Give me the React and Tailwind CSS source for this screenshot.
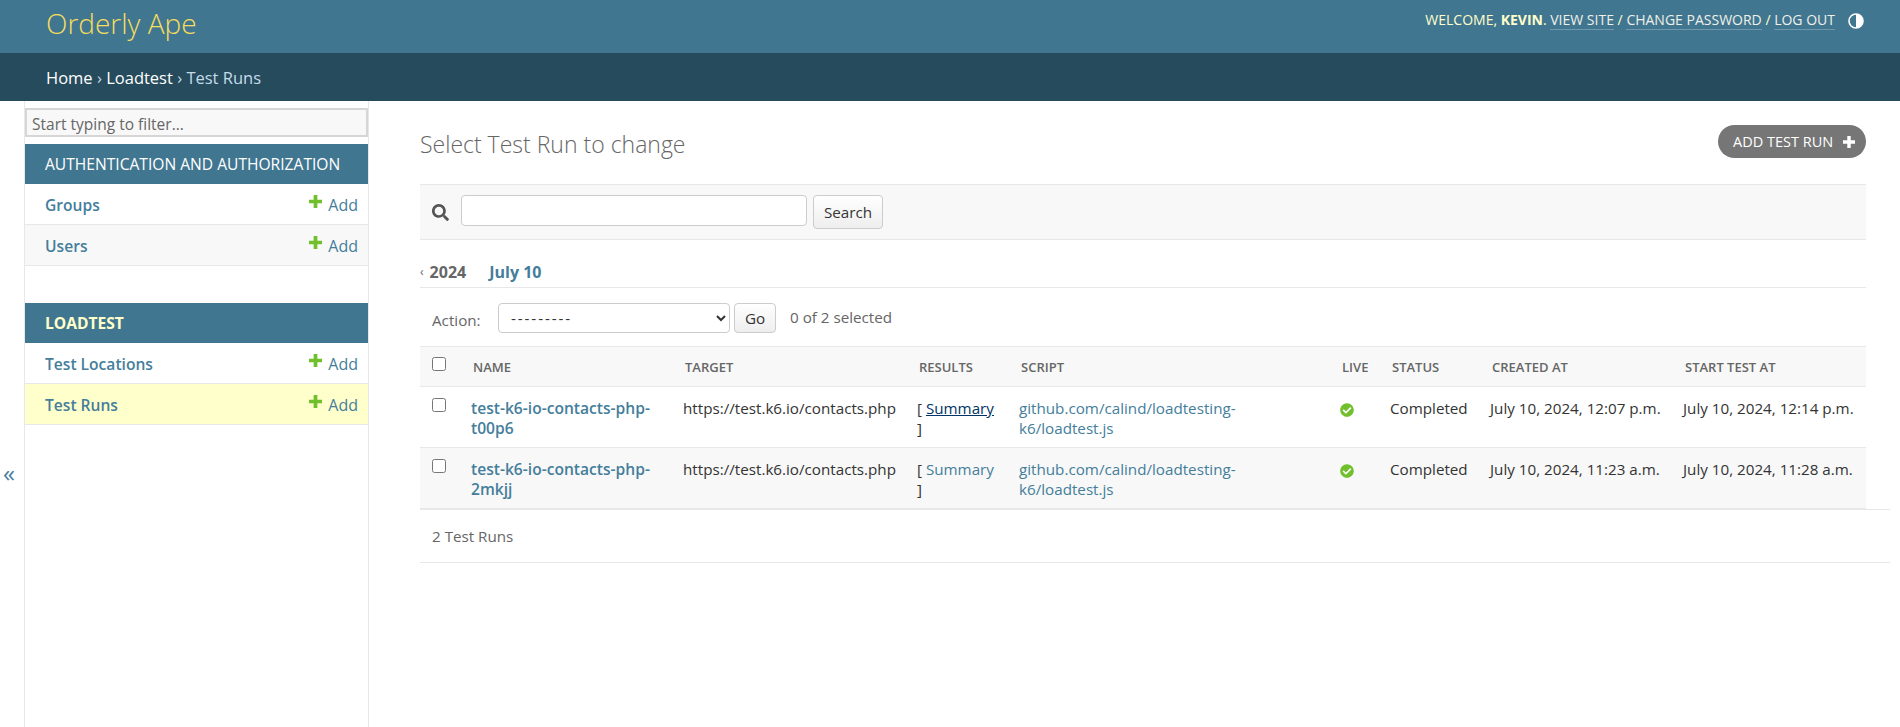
import React from "react";
import { FaSearch, FaCheckCircle } from "react-icons/fa";

function PlusIcon({ className }) {
  return (
    <svg viewBox="0 0 14 14" className={className} fill="currentColor">
      <path d="M5 0h4v5h5v4H9v5H5V9H0V5h5z" />
    </svg>
  );
}

function SideRow({ label, active, striped }) {
  return (
    <div className={`h-[41px] flex items-center justify-between pt-[2px] pl-5 pr-[10px] border-b border-[#e8e8e8] ${active ? "bg-[#ffffcc]" : striped ? "bg-[#f8f8f8]" : "bg-white"}`}>
      <span className="text-[#447e9b] font-semibold text-[15.6px]">{label}</span>
      <span className="flex items-center gap-[6px] text-[#447e9b] text-[16px]">
        <PlusIcon className="w-[13px] h-[13px] text-[#70bf2b] -mt-[7px]" />
        Add
      </span>
    </div>
  );
}

function TestRow({ name, suffix, created, started, striped, hovered }) {
  return (
    <tr className={`border-b border-[#e8e8e8] align-top h-[61px] ${striped ? "bg-[#f8f8f8]" : "bg-white"}`}>
      <td className="pl-3 pt-[11px]">
        <input type="checkbox" className="w-[14px] h-[14px] block" />
      </td>
      <td className="px-[5px] pt-[11px] pb-2 font-semibold text-[15.6px]">
        <a className="text-[#447e9b]">{name}<br />{suffix}</a>
      </td>
      <td className="px-[5px] pt-[11px] pb-2 whitespace-nowrap">https://test.k6.io/contacts.php</td>
      <td className="px-[5px] pt-[11px] pb-2">
        [ <a className={hovered ? "text-[#003366] underline" : "text-[#447e9b]"}>Summary</a><br />]
      </td>
      <td className="px-[5px] pt-[11px] pb-2 text-[#447e9b]">github.com/calind/loadtesting-<br />k6/loadtest.js</td>
      <td className="px-[5px] pt-[16px]">
        <FaCheckCircle className="w-[14px] h-[14px] text-[#70bf2b]" />
      </td>
      <td className="px-[5px] pt-[11px] pb-2">Completed</td>
      <td className="px-[5px] pt-[11px] pb-2 whitespace-nowrap">{created}</td>
      <td className="px-[5px] pt-[11px] pb-2 whitespace-nowrap">{started}</td>
    </tr>
  );
}

export default function App() {
  const headCell = "px-[7px] text-left font-semibold text-[13px] text-[#666] uppercase";
  return (
    <div className="h-screen flex flex-col overflow-hidden bg-white text-[#333] text-[15.2px] leading-5 font-['Open_Sans','Noto_Sans',sans-serif]">
      <header className="h-[53px] bg-[#417690] flex justify-between pl-[46px] pr-[36px] shrink-0">
        <div className="text-[#f5dd5d] font-light text-[28px] leading-[46px]">Orderly Ape</div>
        <div className="flex items-start pt-[10px] text-[#ffffcc] text-[14px] uppercase">
          <span>
            Welcome, <strong className="font-bold">Kevin</strong>.{" "}
            <a className="text-[#f0f0e8] border-b border-white/25">View site</a> /{" "}
            <a className="text-[#f0f0e8] border-b border-white/25">Change password</a> /{" "}
            <a className="text-[#f0f0e8] border-b border-white/25">Log out</a>
          </span>
          <svg viewBox="0 0 16 16" className="w-4 h-4 ml-[13px] mt-[3px]">
            <circle cx="8" cy="8" r="7" fill="none" stroke="#fff" strokeWidth="1.6" />
            <path d="M8 1a7 7 0 0 1 0 14z" fill="#fff" />
          </svg>
        </div>
      </header>

      <nav className="h-[48px] bg-[#264b5d] flex items-center pt-[2px] pl-[46px] text-[16.5px] text-[#c4dce8] shrink-0">
        <a className="text-white">Home</a>&nbsp;›&nbsp;<a className="text-white">Loadtest</a>&nbsp;›&nbsp;Test Runs
      </nav>

      <div className="flex flex-1 min-h-0">
        <button className="w-[24px] shrink-0 flex justify-start pl-[3px] pt-[360px] text-[#447e9b] text-[24px] leading-6">«</button>

        <aside className="w-[345px] shrink-0 border-x border-[#e8e8e8] pt-[7px]">
          <input
            placeholder="Start typing to filter..."
            className="w-full h-[29px] mb-[7px] bg-[#f8f8f8] border-2 border-[#d6d6d6] px-[5px] pt-[3px] text-[15.5px] placeholder:text-[#666] outline-none"
          />
          <div className="h-10 bg-[#417690] flex items-center pl-5 text-white text-[15.6px] uppercase">Authentication and Authorization</div>
          <SideRow label="Groups" />
          <SideRow label="Users" striped />
          <div className="h-[37px]" />
          <div className="h-10 bg-[#417690] flex items-center pl-5 text-[#ffffcc] font-bold text-[15.6px] uppercase">Loadtest</div>
          <SideRow label="Test Locations" />
          <SideRow label="Test Runs" active />
        </aside>

        <main className="flex-1 min-w-0 pl-[51px] pr-[34px]">
          <div className="flex justify-between items-start h-[83px] pt-[23px]">
            <h1 className="font-light text-[23px] leading-10 text-[#666]">Select Test Run to change</h1>
            <a className="h-[33px] w-[148px] mt-px rounded-full bg-[#767676] text-white text-[14.5px] uppercase flex items-center justify-between pl-[15px] pr-[11px]">
              Add test run
              <PlusIcon className="w-3 h-3" />
            </a>
          </div>

          <div className="h-[56px] bg-[#f8f8f8] border-y border-[#e8e8e8] flex items-start pt-[10px] pl-3 gap-[6px]">
            <FaSearch className="w-[17px] h-[17px] text-[#555] mt-[9px] mr-[6px]" />
            <input className="w-[346px] h-[31px] bg-white border border-[#cccccc] rounded-[4px]" />
            <button className="w-[70px] h-[34px] bg-gradient-to-b from-white to-[#eeeeee] border border-[#cccccc] rounded-[4px] text-[#333]">Search</button>
          </div>

          <div className="h-[48px] border-b border-[#e8e8e8] flex items-center pt-[16px] font-bold text-[16px]">
            <span className="text-[#666] font-normal text-[12px] mr-[6px]">‹</span>
            <span className="text-[#666]">2024</span>
            <a className="text-[#447e9b] ml-[23px]">July 10</a>
          </div>

          <div className="h-[58px] flex items-start pt-[15px] pl-3 text-[#666]">
            <span className="w-[51px] mt-[7px]">Action:</span>
            <select className="w-[232px] h-[30px] ml-[15px] bg-white border border-[#cccccc] rounded-[4px] pl-2 text-[#333] tracking-[1.9px]">
              <option>---------</option>
            </select>
            <button className="w-[42px] h-[30px] ml-1 bg-gradient-to-b from-white to-[#eeeeee] border border-[#cccccc] rounded-[4px] text-[#333]">Go</button>
            <span className="ml-[14px] mt-1">0 of 2 selected</span>
          </div>

          <table className="w-full table-fixed border-collapse">
            <colgroup>
              <col className="w-[46px]" />
              <col className="w-[212px]" />
              <col className="w-[234px]" />
              <col className="w-[102px]" />
              <col className="w-[321px]" />
              <col className="w-[50px]" />
              <col className="w-[100px]" />
              <col className="w-[193px]" />
              <col />
            </colgroup>
            <thead>
              <tr className="h-10 bg-[#f8f8f8] border-y border-[#e8e8e8]">
                <th className="pl-3 text-left"><input type="checkbox" className="w-[14px] h-[14px] block -mt-[6px]" /></th>
                <th className={headCell}>Name</th>
                <th className={headCell}>Target</th>
                <th className={headCell}>Results</th>
                <th className={headCell}>Script</th>
                <th className={headCell}>Live</th>
                <th className={headCell}>Status</th>
                <th className={headCell}>Created at</th>
                <th className={headCell}>Start test at</th>
              </tr>
            </thead>
            <tbody>
              <TestRow name="test-k6-io-contacts-php-" suffix="t00p6" created="July 10, 2024, 12:07 p.m." started="July 10, 2024, 12:14 p.m." hovered />
              <TestRow name="test-k6-io-contacts-php-" suffix="2mkjj" created="July 10, 2024, 11:23 a.m." started="July 10, 2024, 11:28 a.m." striped />
            </tbody>
          </table>

          <div className="h-[54px] mr-[-24px] border-y border-[#e8e8e8] flex items-center pl-3 text-[#666]">2 Test Runs</div>
        </main>
      </div>
    </div>
  );
}
